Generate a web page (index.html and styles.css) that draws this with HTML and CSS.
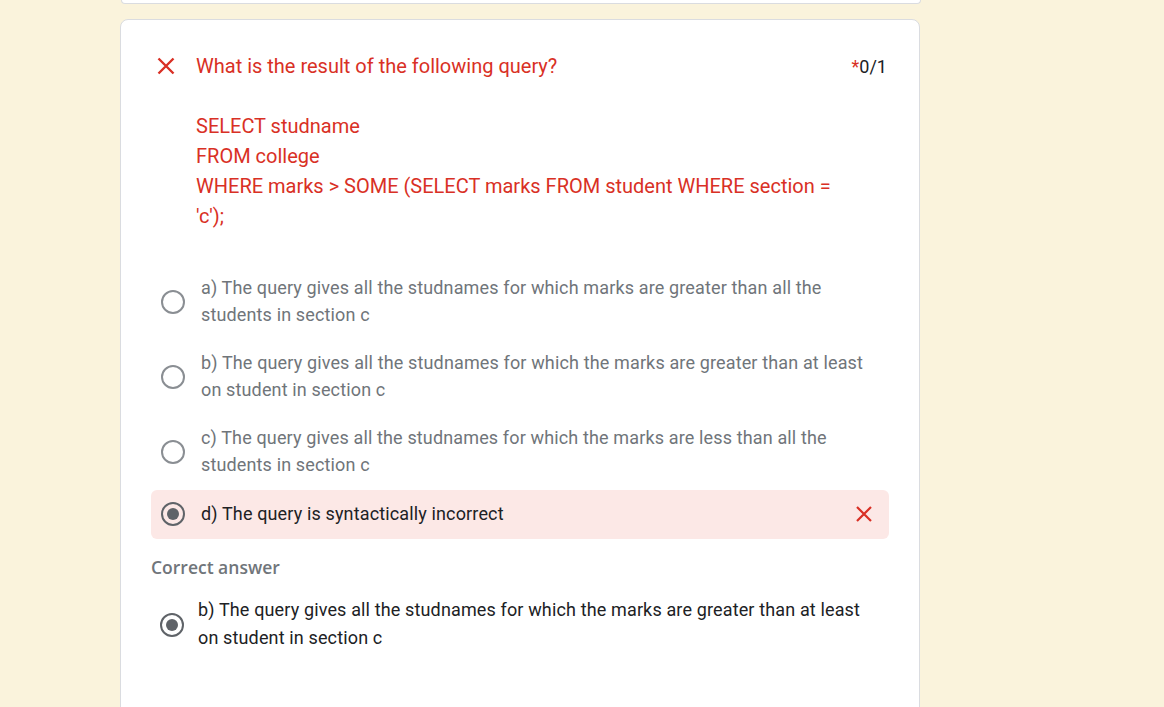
FILE: index.html
```html
<!DOCTYPE html>
<html>
<head>
<meta charset="utf-8">
<link rel="stylesheet" href="styles.css">
</head>
<body>
<div class="page">
  <div class="prev-card"></div>
  <div class="card">
    <div class="q-header">
      <div class="q-icon">
        <svg width="20" height="20" viewBox="0 0 20 20"><path d="M2.5 2.5 L17.5 17.5 M17.5 2.5 L2.5 17.5" stroke="#d93025" stroke-width="2.4" fill="none"/></svg>
      </div>
      <div class="q-title">What is the result of the following query?</div>
      <div class="q-score"><span class="star">*</span>0/1</div>
    </div>
    <div class="q-query">
      <div>SELECT studname</div>
      <div>FROM college</div>
      <div>WHERE marks &gt; SOME (SELECT marks FROM student WHERE section = 'c');</div>
    </div>
    <div class="options">
      <div class="opt">
        <span class="radio"></span>
        <span class="opt-text">a) The query gives all the studnames for which marks are greater than all the students in section c</span>
      </div>
      <div class="opt">
        <span class="radio"></span>
        <span class="opt-text">b) The query gives all the studnames for which the marks are greater than at least on student in section c</span>
      </div>
      <div class="opt">
        <span class="radio"></span>
        <span class="opt-text">c) The query gives all the studnames for which the marks are less than all the students in section c</span>
      </div>
      <div class="opt opt-wrong">
        <span class="radio checked"></span>
        <span class="opt-text">d) The query is syntactically incorrect</span>
        <svg class="wrong-x" width="18" height="18" viewBox="0 0 18 18"><path d="M2 2 L16 16 M16 2 L2 16" stroke="#d93025" stroke-width="2.2" fill="none"/></svg>
      </div>
    </div>
    <div class="correct-label">Correct answer</div>
    <div class="correct-opt">
      <span class="radio checked"></span>
      <span class="correct-text">b) The query gives all the studnames for which the marks are greater than at least on student in section c</span>
    </div>
  </div>
</div>
</body>
</html>
```
FILE: styles.css
```css
html, body {
  margin: 0;
  padding: 0;
  background: #faf3dc;
  font-family: Roboto, "Liberation Sans", Arial, sans-serif;
  overflow: hidden;
}
.page {
  display: flex;
  flex-direction: column;
  align-items: flex-start;
  padding-left: 120px;
}
.prev-card {
  width: 798px;
  margin-left: 1px;
  height: 3px;
  background: #fff;
  border: 1px solid #dadce0;
  border-top: none;
  border-radius: 0 0 8px 8px;
}
.card {
  margin-top: 15px;
  box-sizing: border-box;
  width: 800px;
  height: 720px;
  background: #fff;
  border: 1px solid #dadce0;
  border-radius: 8px;
  padding: 34px 30px 0 30px;
}
.q-header {
  display: flex;
  align-items: center;
  height: 24px;
}
.q-icon {
  width: 30px;
  height: 24px;
  display: flex;
  align-items: center;
  justify-content: center;
  margin-right: 15px;
}
.q-title {
  flex: 1;
  color: #d93025;
  font-size: 20px;
  line-height: 24px;
}
.q-score {
  font-size: 18px;
  color: #202124;
  margin-right: 2px;
}
.star { color: #d93025; }
.q-query {
  margin: 33px 0 0 45px;
  width: 650px;
  color: #d93025;
  font-size: 20px;
  line-height: 30px;
}
.options {
  margin-top: 32px;
  display: flex;
  flex-direction: column;
}
.opt {
  display: flex;
  align-items: center;
  padding: 10.5px 0 10.5px 10px;
  border-radius: 6px;
}
.opt-wrong {
  margin-top: 1.5px;
  padding: 10px 0 10px 10px;
  background: #fce8e6;
}
.radio {
  flex: none;
  box-sizing: border-box;
  width: 24px;
  height: 24px;
  border: 2px solid #8a8e93;
  border-radius: 50%;
  margin-top: 3px;
  display: flex;
  align-items: center;
  justify-content: center;
}
.radio.checked {
  border-color: #5f6368;
}
.radio.checked::after {
  content: "";
  width: 12px;
  height: 12px;
  border-radius: 50%;
  background: #5f6368;
}
.opt-wrong .radio { margin-top: 0; }
.opt-text {
  margin-left: 16px;
  width: 672px;
  color: #70757a;
  font-size: 18px;
  line-height: 27px;
  letter-spacing: 0.14px;
}
.opt-wrong .opt-text {
  flex: 1;
  color: #202124;
  padding-bottom: 2px;
}
.wrong-x {
  margin-right: 16px;
}
.correct-label {
  margin-top: 16px;
  color: #70757a;
  font-family: "Open Sans", Roboto, sans-serif;
  font-size: 17.5px;
  font-weight: 600;
  line-height: 24px;
}
.correct-opt {
  display: flex;
  align-items: center;
  margin-top: 17px;
  padding-left: 9px;
}
.correct-opt .radio {
  margin-top: 2px;
}
.correct-text {
  margin-left: 14px;
  width: 672px;
  color: #202124;
  font-size: 18px;
  line-height: 28px;
  letter-spacing: 0.14px;
}
```
